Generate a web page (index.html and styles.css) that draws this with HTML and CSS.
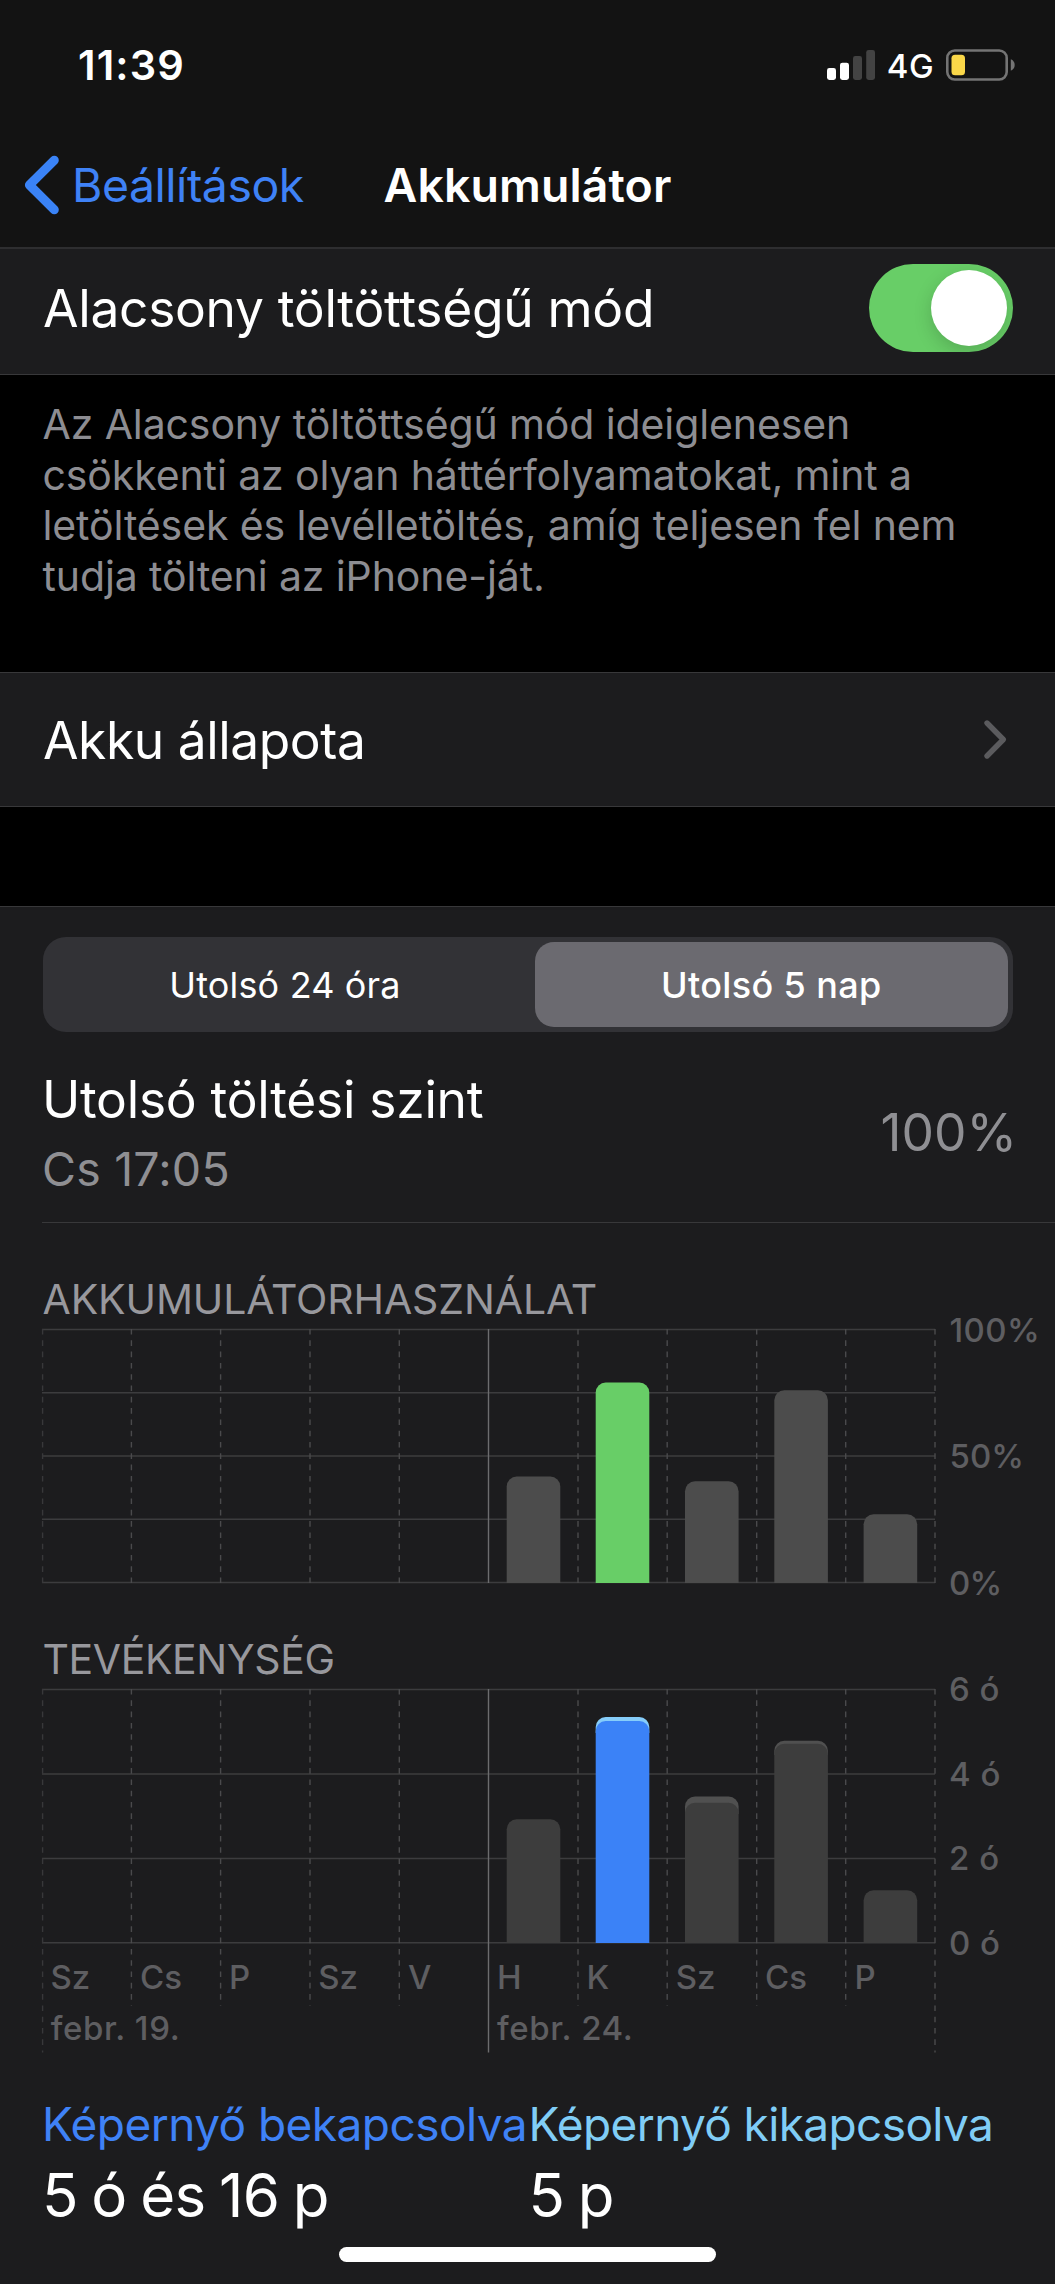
FILE: index.html
```html
<!DOCTYPE html>
<html lang="hu">
<head>
<meta charset="utf-8">
<title>Akkumulátor</title>
<link rel="stylesheet" href="styles.css">
</head>
<body>
<header class="header">
  <div class="status">
    <span class="time">11:39</span>
    <div class="status-icons">
      <svg width="48" height="30" viewBox="0 0 48 30">
        <rect x="0" y="18" width="9" height="12" rx="2.4" fill="#fff"/>
        <rect x="13" y="12.7" width="9" height="17.3" rx="2.4" fill="#fff"/>
        <rect x="26" y="6" width="9" height="24" rx="2.4" fill="#434343"/>
        <rect x="39.2" y="0" width="8.8" height="30" rx="2.4" fill="#434343"/>
      </svg>
      <span class="network">4G</span>
      <svg width="69" height="32" viewBox="0 0 69 32">
        <rect x="1.3" y="1.5" width="59.4" height="29" rx="7.5" fill="none" stroke="#747474" stroke-width="2.6"/>
        <rect x="5.5" y="5.7" width="13.5" height="20.6" rx="3.6" fill="#fad749"/>
        <path d="M64.8 10.3C67.2 11.1 68.7 13.3 68.7 16C68.7 18.7 67.2 20.9 64.8 21.7Z" fill="#747474"/>
      </svg>
    </div>
  </div>
  <nav class="nav">
    <a class="back">
      <svg width="36" height="62" viewBox="0 0 36 62"><path d="M30.3 6.2L5.4 31L30.3 55.8" fill="none" stroke="#3a83f7" stroke-width="9" stroke-linecap="round" stroke-linejoin="round"/></svg>
      <span>Beállítások</span>
    </a>
    <h1 class="title">Akkumulátor</h1>
  </nav>
</header>

<section class="row row-toggle">
  <span class="label">Alacsony töltöttségű mód</span>
  <span class="switch"><span class="knob"></span></span>
</section>
<p class="note">Az Alacsony töltöttségű mód ideiglenesen<br>csökkenti az olyan háttérfolyamatokat, mint a<br>letöltések és levélletöltés, amíg teljesen fel nem<br>tudja tölteni az iPhone-ját.</p>

<section class="row row-link">
  <span class="label">Akku állapota</span>
  <svg width="25" height="42" viewBox="0 0 25 42"><path d="M4 4L20.3 20.5L4 37" fill="none" stroke="#5b5b5e" stroke-width="5.4" stroke-linecap="round" stroke-linejoin="round"/></svg>
</section>

<main class="card">
  <div class="segments">
    <span class="segment">Utolsó 24 óra</span>
    <span class="segment active">Utolsó 5 nap</span>
  </div>

  <div class="charge">
    <div class="charge-text">
      <span class="charge-title">Utolsó töltési szint</span>
      <span class="charge-time">Cs 17:05</span>
    </div>
    <span class="charge-value">100%</span>
  </div>

  <h2 class="heading usage-heading">AKKUMULÁTORHASZNÁLAT</h2>
  <svg class="chart" width="1055" height="300" viewBox="0 1324 1055 300">
    <path class="grid" d="M42 1329.5H935M42 1392.7H935M42 1456H935M42 1519.3H935M42 1582.5H935"/>
    <path class="dash edge" d="M42.6 1329V1583"/>
    <path class="dash" d="M131.4 1329V1583M220.6 1329V1583M310 1329V1583M399.3 1329V1583M578 1329V1583M667.2 1329V1583M756.7 1329V1583M845.7 1329V1583M935 1329V1583"/>
    <path class="week" d="M488.5 1329V1583"/>
    <path fill="#4c4c4c" d="M506.7 1583V1486.5a10 10 0 0 1 10-10h33.6a10 10 0 0 1 10 10V1583z"/>
    <path fill="#68ce67" d="M595.7 1583V1392.5a10 10 0 0 1 10-10h33.6a10 10 0 0 1 10 10V1583z"/>
    <path fill="#4c4c4c" d="M685 1583V1491.3a10 10 0 0 1 10-10h33.6a10 10 0 0 1 10 10V1583z"/>
    <path fill="#4c4c4c" d="M774.3 1583V1400.3a10 10 0 0 1 10-10h33.6a10 10 0 0 1 10 10V1583z"/>
    <path fill="#4c4c4c" d="M863.6 1583V1524.3a10 10 0 0 1 10-10h33.6a10 10 0 0 1 10 10V1583z"/>
    <g class="axis">
      <text x="949.5" y="1341.5" letter-spacing="0.4">100%</text>
      <text x="949.5" y="1468">50%</text>
      <text x="949" y="1594.5" letter-spacing="-0.8">0%</text>
    </g>
  </svg>

  <h2 class="heading activity-heading">TEVÉKENYSÉG</h2>
  <svg class="chart" width="1055" height="372" viewBox="0 1684 1055 372">
    <path class="grid" d="M42 1689.5H935M42 1774H935M42 1858.5H935M42 1942.7H935"/>
    <path class="dash edge" d="M42.6 1689V2052.5"/>
    <path class="dash" d="M131.4 1689V2006M220.6 1689V2006M310 1689V2006M399.3 1689V2006M578 1689V2006M667.2 1689V2006M756.7 1689V2006M845.7 1689V2006M935 1689V2052.5"/>
    <path class="week" d="M488.5 1689V2052.5"/>
    <path fill="#3d3d3d" d="M506.7 1943V1829.3a10 10 0 0 1 10-10h33.6a10 10 0 0 1 10 10V1943z"/>
    <path fill="#86cdfa" d="M595.7 1733V1727a10 10 0 0 1 10-10h33.6a10 10 0 0 1 10 10V1733z"/>
    <path fill="#3b82f7" d="M595.7 1943V1731a10 10 0 0 1 10-10h33.6a10 10 0 0 1 10 10V1943z"/>
    <path fill="#505050" d="M685 1814V1806.5a10 10 0 0 1 10-10h33.6a10 10 0 0 1 10 10V1814z"/>
    <path fill="#3d3d3d" d="M685 1943V1812.7a10 10 0 0 1 10-10h33.6a10 10 0 0 1 10 10V1943z"/>
    <path fill="#505050" d="M774.3 1755V1750.8a10 10 0 0 1 10-10h33.6a10 10 0 0 1 10 10V1755z"/>
    <path fill="#3d3d3d" d="M774.3 1943V1753.8a10 10 0 0 1 10-10h33.6a10 10 0 0 1 10 10V1943z"/>
    <path fill="#3d3d3d" d="M863.6 1943V1900.2a10 10 0 0 1 10-10h33.6a10 10 0 0 1 10 10V1943z"/>
    <g class="axis">
      <text x="949" y="1701.3" letter-spacing="0.5">6 ó</text>
      <text x="949" y="1785.7" letter-spacing="0.5">4 ó</text>
      <text x="949" y="1870" letter-spacing="0.5">2 ó</text>
      <text x="949" y="1954.5" letter-spacing="0.5">0 ó</text>
      <text x="50.5" y="1988.5">Sz</text>
      <text x="140" y="1988.5">Cs</text>
      <text x="229" y="1988.5">P</text>
      <text x="318.3" y="1988.5">Sz</text>
      <text x="408" y="1988.5">V</text>
      <text x="497" y="1988.5">H</text>
      <text x="586.4" y="1988.5">K</text>
      <text x="675.8" y="1988.5">Sz</text>
      <text x="765" y="1988.5">Cs</text>
      <text x="854.4" y="1988.5">P</text>
      <text class="date" x="50.7" y="2040">febr. 19.</text>
      <text class="date" x="497" y="2040">febr. 24.</text>
    </g>
  </svg>

  <div class="totals">
    <div class="total screen-on">
      <span class="total-name">Képernyő bekapcsolva</span>
      <span class="total-value">5 ó és 16 p</span>
    </div>
    <div class="total screen-off">
      <span class="total-name">Képernyő kikapcsolva</span>
      <span class="total-value">5 p</span>
    </div>
  </div>
  <div class="home-indicator"></div>
</main>
</body>
</html>
```
FILE: styles.css
```css
* { box-sizing: border-box; }

body {
  margin: 0;
  width: 1055px;
  height: 2284px;
  overflow: hidden;
  background: #000;
  color: #fff;
  font-family: Inter, "Liberation Sans", sans-serif;
}

svg { display: block; flex: none; }

/* Header */
.header {
  height: 249px;
  background: #131313;
  border-bottom: 2px solid #2e2e30;
}
.status {
  display: flex;
  justify-content: space-between;
  align-items: center;
  height: 130px;
  padding: 0 40px 0 78px;
}
.time {
  font-size: 41.5px;
  font-weight: 600;
  line-height: 50px;
  letter-spacing: 1.1px;
}
.status-icons {
  display: flex;
  align-items: center;
  gap: 12px;
}
.network {
  padding-top: 2px;
  font-size: 33px;
  font-weight: 500;
  line-height: 40px;
  letter-spacing: 0.4px;
}
.nav {
  display: grid;
  grid-template-columns: 1fr auto 1fr;
  align-items: center;
  height: 117px;
  padding-bottom: 7px;
}
.back {
  display: flex;
  align-items: center;
  gap: 12px;
  padding-left: 24px;
  color: #3f82f6;
  font-size: 46.4px;
  line-height: 56px;
  letter-spacing: -0.45px;
}
.title {
  margin: 0;
  font-size: 46.4px;
  font-weight: 600;
  line-height: 56px;
  letter-spacing: 0.12px;
}

/* List rows */
.row {
  display: flex;
  justify-content: space-between;
  align-items: center;
  background: #1c1c1e;
}
.label {
  font-size: 51.5px;
  line-height: 62px;
  letter-spacing: -0.3px;
}
.row-toggle {
  height: 126px;
  padding: 0 42px 8px 43px;
  border-bottom: 1px solid #38383a;
}
.switch {
  display: flex;
  justify-content: flex-end;
  align-items: center;
  width: 144px;
  height: 88px;
  padding-right: 6px;
  border-radius: 44px;
  background: #68ce67;
  overflow: hidden;
}
.knob {
  width: 76px;
  height: 76px;
  border-radius: 50%;
  background: #fff;
  box-shadow: 0 6px 18px rgba(0, 0, 0, 0.17);
}
.note {
  height: 297px;
  margin: 0;
  padding: 24px 0 0 42.5px;
  color: #8d8d92;
  font-size: 41px;
  line-height: 50.5px;
  letter-spacing: -0.11px;
  white-space: nowrap;
}
.row-link {
  height: 135px;
  padding: 1px 47px 0 43px;
  border-top: 1px solid #38383a;
  border-bottom: 1px solid #38383a;
}
.row-link .label { letter-spacing: -0.45px; }

/* Usage card */
.card {
  height: 1378px;
  margin-top: 99px;
  padding-top: 30px;
  border-top: 1px solid #38383a;
  background: #1c1c1e;
}
.segments {
  display: grid;
  grid-template-columns: 485px 472.5px;
  column-gap: 7.5px;
  width: 970px;
  height: 95px;
  margin-left: 42.5px;
  padding: 5px 5px 5px 0;
  border-radius: 23px;
  background: #323236;
}
.segment {
  display: flex;
  justify-content: center;
  align-items: center;
  font-size: 36px;
  letter-spacing: 0.15px;
}
.active {
  border-radius: 19px;
  background: #6b6a70;
  font-weight: 500;
  letter-spacing: 0.37px;
}
.charge {
  display: flex;
  justify-content: space-between;
  align-items: center;
  height: 191px;
  margin-left: 42px;
  padding: 10px 38px 0 0;
  border-bottom: 1px solid #38383a;
}
.charge-text {
  display: flex;
  flex-direction: column;
  gap: 11px;
}
.charge-title {
  font-size: 51.5px;
  line-height: 62px;
  letter-spacing: -0.28px;
}
.charge-time {
  color: #8f8f93;
  font-size: 46.5px;
  line-height: 56px;
  letter-spacing: 0.2px;
}
.charge-value {
  padding-bottom: 1px;
  color: #8f8f93;
  font-size: 51.5px;
  line-height: 62px;
}
.heading {
  margin: 0;
  padding-left: 42.5px;
  color: #98989d;
  font-size: 41px;
  font-weight: 400;
  line-height: 50px;
}
.usage-heading {
  margin-top: 51px;
  letter-spacing: -0.12px;
}
.activity-heading {
  margin-top: 10px;
  letter-spacing: -0.4px;
}

/* Charts */
.chart { overflow: visible; }
.grid {
  fill: none;
  stroke: #3c3c3e;
  stroke-width: 1.4;
}
.dash {
  fill: none;
  stroke: #4a4a4c;
  stroke-width: 1.4;
  stroke-dasharray: 5.6 5.7;
}
.edge { stroke: #38383a; }
.week {
  fill: none;
  stroke: #6c6c6e;
  stroke-width: 1.4;
}
.axis {
  fill: #5e5e61;
  font-size: 33px;
  font-weight: 500;
}
.date { letter-spacing: 0.6px; }

/* Screen time totals */
.totals {
  display: grid;
  grid-template-columns: 486.4px 1fr;
  margin-top: 40px;
  padding-left: 42px;
  white-space: nowrap;
}
.total {
  display: flex;
  flex-direction: column;
  gap: 7px;
}
.total-name {
  font-size: 46px;
  line-height: 56px;
  letter-spacing: -0.55px;
}
.screen-on .total-name { color: #3f82f6; }
.screen-off .total-name {
  color: #80cdf6;
  letter-spacing: -0.63px;
}
.total-value {
  font-size: 60px;
  line-height: 72px;
  letter-spacing: -0.7px;
  word-spacing: -2.6px;
}
.home-indicator {
  width: 377px;
  height: 14.5px;
  margin: 16px auto 0;
  border-radius: 8px;
  background: #fff;
}
```
